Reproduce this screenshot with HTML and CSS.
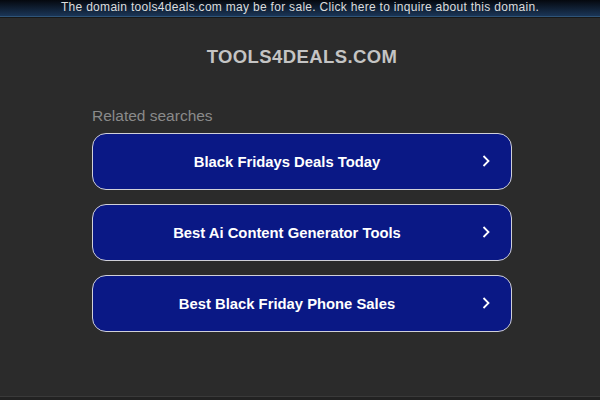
FILE: index.html
```html
<!DOCTYPE html>
<html>
<head>
<meta charset="utf-8">
<link rel="stylesheet" href="styles.css">
</head>
<body>
<div class="topbar">The domain tools4deals.com may be for sale. Click here to inquire about this domain.</div>
<div class="main">
  <h1 class="title">TOOLS4DEALS.COM</h1>
  <div class="related">
    <div class="label">Related searches</div>
    <a class="btn"><span>Black Fridays Deals Today</span><svg class="chev" width="10" height="14" viewBox="0 0 10 14"><path d="M2.5 2 L7.5 7 L2.5 12" fill="none" stroke="#fff" stroke-width="1.8"/></svg></a>
    <a class="btn"><span>Best Ai Content Generator Tools</span><svg class="chev" width="10" height="14" viewBox="0 0 10 14"><path d="M2.5 2 L7.5 7 L2.5 12" fill="none" stroke="#fff" stroke-width="1.8"/></svg></a>
    <a class="btn"><span>Best Black Friday Phone Sales</span><svg class="chev" width="10" height="14" viewBox="0 0 10 14"><path d="M2.5 2 L7.5 7 L2.5 12" fill="none" stroke="#fff" stroke-width="1.8"/></svg></a>
  </div>
</div>
<div class="bottom"></div>
</body>
</html>
```
FILE: styles.css
```css
html, body {
  margin: 0;
  padding: 0;
  height: 400px;
  overflow: hidden;
}
body {
  background: #2b2b2b;
  font-family: "Liberation Sans", Arial, sans-serif;
  position: relative;
}
.topbar {
  height: 16px;
  line-height: 15px;
  font-size: 12px;
  letter-spacing: 0.3px;
  color: #dcdcdc;
  text-align: center;
  background: linear-gradient(#05080e, #1a3556);
  border-bottom: 1px solid #2f5478;
  box-shadow: 0 1px 0 #181818;
}
.main {
  display: flex;
  flex-direction: column;
  align-items: center;
  padding-left: 4px;
}
.title {
  margin: 29px 0 0;
  font-size: 18.5px;
  font-weight: bold;
  letter-spacing: 0.4px;
  color: #c4c4c4;
  line-height: 22px;
}
.related {
  width: 420px;
  margin-top: 39px;
  display: flex;
  flex-direction: column;
  gap: 14px;
}
.label {
  font-size: 15.5px;
  color: #8a8a8a;
  line-height: 18px;
  margin-bottom: -6px;
}
.btn {
  box-sizing: border-box;
  height: 57px;
  border: 1.5px solid #d0d0d8;
  border-radius: 14px;
  background: #0a1885;
  display: flex;
  align-items: center;
  justify-content: center;
  padding-right: 30px;
  position: relative;
  color: #fff;
  font-weight: bold;
  font-size: 14.8px;
}
.chev {
  position: absolute;
  right: 20px;
  top: 20px;
}
.bottom {
  position: absolute;
  left: 0;
  right: 0;
  bottom: 0;
  height: 3px;
  background: #222;
  border-top: 1px solid #3a3a3a;
}
```
